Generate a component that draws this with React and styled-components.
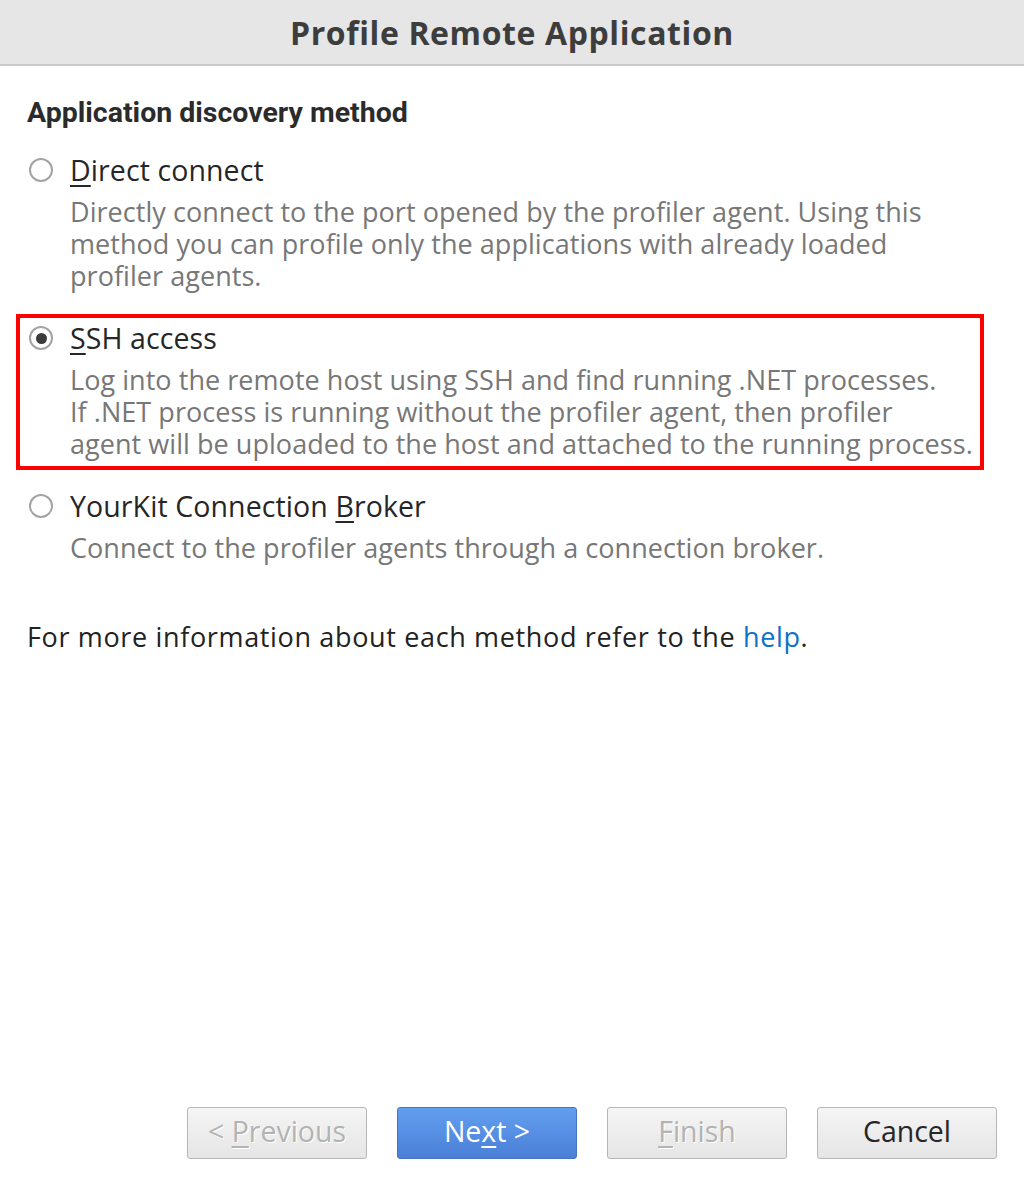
import React, { useState } from 'react'
import styled, { createGlobalStyle } from 'styled-components'

const GlobalStyle = createGlobalStyle`
  html, body {
    margin: 0;
    padding: 0;
    background: #ffffff;
  }
  body {
    font-family: "Open Sans", "Noto Sans", sans-serif;
    color: #2b2b2b;
  }
`

const Dialog = styled.div`
  width: 1024px;
  height: 1186px;
  display: flex;
  flex-direction: column;
  background: #fff;
`

const TitleBar = styled.header`
  height: 64px;
  flex-shrink: 0;
  display: flex;
  align-items: center;
  justify-content: center;
  background: #e6e6e6;
  border-bottom: 2px solid #c9c9c9;
  font-family: "Open Sans", sans-serif;
  font-weight: 700;
  font-size: 32px;
  color: #3d3d3d;
  letter-spacing: 0.6px;
`

const Body = styled.main`
  flex: 1;
  display: flex;
  flex-direction: column;
  padding: 26px 27px 0 27px;
`

const Heading = styled.h2`
  margin: 0;
  font-family: "Roboto", sans-serif;
  font-weight: 700;
  font-size: 28.5px;
  line-height: 42px;
  color: #2b2b2b;
`

const Options = styled.div`
  display: flex;
  flex-direction: column;
  margin-top: 12px;
`

// the highlighted option gets the red frame; the others keep an invisible one
const Option = styled.div`
  display: flex;
  flex-direction: column;
  padding: 0 0 6px 0;
  margin-bottom: 12px;
  border-top: 4px solid ${p => (p.$highlight ? '#ff0000' : 'transparent')};
  border-bottom: 4px solid ${p => (p.$highlight ? '#ff0000' : 'transparent')};
  ${p =>
    p.$highlight &&
    `
    border-left: 4px solid #ff0000;
    border-right: 4px solid #ff0000;
    margin-left: -11px;
    margin-right: 13px;
    padding-left: 7px;
  `}
`

const OptionRow = styled.label`
  display: flex;
  align-items: center;
  gap: 17px;
  cursor: pointer;
  height: 40px;
`

const Radio = styled.span`
  width: 24px;
  height: 24px;
  margin-left: 2px;
  box-sizing: border-box;
  border-radius: 50%;
  border: 2px solid #a3a3a3;
  background: #fff;
  display: flex;
  align-items: center;
  justify-content: center;
  flex-shrink: 0;

  &::after {
    content: '';
    width: 11px;
    height: 11px;
    border-radius: 50%;
    background: ${p => (p.$checked ? '#3b3b3b' : 'transparent')};
  }
`

const OptionLabel = styled.span`
  font-size: 28.5px;
  color: #262626;
  letter-spacing: 0.1px;
`

const Mnemonic = styled.u`
  text-decoration-thickness: 2px;
  text-underline-offset: 4px;
`

const Description = styled.p`
  margin: 6px 0 0 43px;
  font-size: 27px;
  line-height: 32px;
  color: #777777;
  letter-spacing: 0.05px;
  white-space: pre-line;
`

const Footnote = styled.p`
  margin: 35px 0 0 0;
  font-size: 27px;
  line-height: 32px;
  color: #222;
  letter-spacing: 0.65px;
`

const HelpLink = styled.a`
  color: #0b72c7;
  text-decoration: none;
`

const ButtonBar = styled.footer`
  display: flex;
  justify-content: flex-end;
  gap: 30px;
  padding: 0 27px 27px 0;
`

const Button = styled.button`
  width: 180px;
  height: 52px;
  box-sizing: border-box;
  border-radius: 3px;
  font-family: "Open Sans", sans-serif;
  font-size: 28.5px;
  cursor: pointer;
  border: 1px solid ${p => (p.$primary ? '#4672bf' : '#b5b5b5')};
  background: ${p =>
    p.$primary
      ? 'linear-gradient(#629ff0, #4a7fd6)'
      : 'linear-gradient(#f5f5f5, #e5e5e5)'};
  color: ${p => (p.$primary ? '#fff' : p.disabled ? '#b3b3b3' : '#262626')};
  text-shadow: ${p => (p.disabled ? '1px 1px 0 #fff' : 'none')};
  padding: 0 0 4px 0;
`

const options = [
  {
    id: 'direct',
    mn: 'D',
    rest: 'irect connect',
    desc: 'Directly connect to the port opened by the profiler agent. Using this\nmethod you can profile only the applications with already loaded\nprofiler agents.',
  },
  {
    id: 'ssh',
    mn: 'S',
    rest: 'SH access',
    desc: 'Log into the remote host using SSH and find running .NET processes.\nIf .NET process is running without the profiler agent, then profiler\nagent will be uploaded to the host and attached to the running process.',
  },
  {
    id: 'broker',
    pre: 'YourKit Connection ',
    mn: 'B',
    rest: 'roker',
    desc: 'Connect to the profiler agents through a connection broker.',
  },
]

export default function App() {
  const [method, setMethod] = useState('ssh')

  return (
    <Dialog>
      <GlobalStyle />
      <TitleBar>Profile Remote Application</TitleBar>
      <Body>
        <Heading>Application discovery method</Heading>
        <Options>
          {options.map(o => (
            <Option key={o.id} $highlight={o.id === 'ssh'}>
              <OptionRow onClick={() => setMethod(o.id)}>
                <Radio $checked={method === o.id} />
                <OptionLabel>
                  {o.pre}
                  <Mnemonic>{o.mn}</Mnemonic>
                  {o.rest}
                </OptionLabel>
              </OptionRow>
              <Description>{o.desc}</Description>
            </Option>
          ))}
        </Options>
        <Footnote>
          For more information about each method refer to the <HelpLink href="#">help</HelpLink>.
        </Footnote>
      </Body>
      <ButtonBar>
        <Button disabled>&lt; <Mnemonic>P</Mnemonic>revious</Button>
        <Button $primary>Ne<Mnemonic>x</Mnemonic>t &gt;</Button>
        <Button disabled><Mnemonic>F</Mnemonic>inish</Button>
        <Button>Cancel</Button>
      </ButtonBar>
    </Dialog>
  )
}
